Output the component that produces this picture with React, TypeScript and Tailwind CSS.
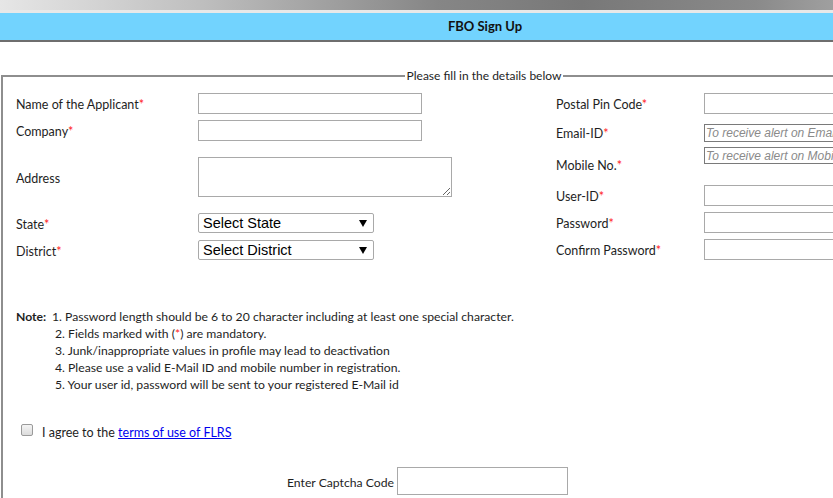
import React from "react";

const FONT = { fontFamily: "Lato, 'Open Sans', sans-serif" };

function Req() {
  return <span className="text-[#ff1a1a]">*</span>;
}

function TextBox({ w = "w-[224px]", h = "h-[21px]", placeholder }: { w?: string; h?: string; placeholder?: string }) {
  if (placeholder) {
    return (
      <input
        placeholder={placeholder}
        className={`${w} ${h} border border-[#7a7a7a] bg-white px-[1px] text-[12px] outline-none placeholder:italic placeholder:text-[#8a8a8a]`}
        style={{ fontFamily: "'Liberation Sans', Arial, sans-serif" }}
      />
    );
  }
  return <input className={`${w} ${h} border border-[#a9a9a9] bg-white outline-none`} />;
}

function Select({ label }: { label: string }) {
  return (
    <div className="relative w-[176px] h-[20px]">
      <select
        className="w-full h-full appearance-none rounded-[2px] border border-[#a9a9a9] bg-white pl-[4px] text-[14.5px] leading-none text-black outline-none"
        style={{ fontFamily: "'Liberation Sans', Arial, sans-serif" }}
      >
        <option>{label}</option>
      </select>
      <svg className="pointer-events-none absolute right-[7px] top-[7px]" width="8" height="7" viewBox="0 0 8 7">
        <path d="M0 0 H8 L4 7 Z" fill="#000" />
      </svg>
    </div>
  );
}

function Row({ label, children, className = "", lw = "w-[182px]" }: { label: React.ReactNode; children: React.ReactNode; className?: string; lw?: string }) {
  return (
    <div className={`flex items-center ${className}`}>
      <div className={`${lw} shrink-0 pt-[4px]`}>{label}</div>
      {children}
    </div>
  );
}

const NOTES = [
  "1. Password length should be 6 to 20 character including at least one special character.",
  "2. Fields marked with (*) are mandatory.",
  "3. Junk/inappropriate values in profile may lead to deactivation",
  "4. Please use a valid E-Mail ID and mobile number in registration.",
  "5. Your user id, password will be sent to your registered E-Mail id",
];

export default function App() {
  return (
    <div className="w-full h-screen overflow-hidden bg-white text-[12.5px] text-[#1e1e1e]" style={FONT}>
      <div className="w-[970px]">
        {/* header */}
        <div className="h-[10px] bg-[linear-gradient(to_right,#e6e6e6,#c0c0c0_20%,#868686_45%,#787878_60%,#8a8a8a_78%,#c6c6c6)]" />
        <div className="h-[3px] bg-[#e8e8e8]" />
        <div className="h-[29px] flex items-center justify-center pt-[1px] bg-[#72d3fe] border-b-2 border-[#6e6e6e] font-bold text-[13px] text-[#111]">
          FBO Sign Up
        </div>

        <fieldset className="mt-[26px] ml-px w-[966px] border-2 border-[#8e8e8e] pb-[20px]">
          <legend className="mx-auto px-[2px] text-[12px] leading-[16px]">Please fill in the details below</legend>

          <div className="pl-[13px]">
            <div className="flex pt-[9px]">
              {/* left column */}
              <div className="w-[540px] shrink-0 flex flex-col">
                <Row label={<>Name of the Applicant<Req /></>} className="h-[21px]">
                  <TextBox />
                </Row>
                <Row label={<>Company<Req /></>} className="h-[21px] mt-[6px]">
                  <TextBox />
                </Row>
                <Row label="Address" className="h-[40px] mt-[16px]">
                  <textarea className="w-[254px] h-[40px] border border-[#a9a9a9] bg-white outline-none" />
                </Row>
                <Row label={<>State<Req /></>} className="h-[20px] mt-[16px]">
                  <Select label="Select State" />
                </Row>
                <Row label={<>District<Req /></>} className="h-[20px] mt-[7px]">
                  <Select label="Select District" />
                </Row>
              </div>

              {/* right column */}
              <div className="flex flex-col">
                <Row lw="w-[148px]" label={<>Postal Pin Code<Req /></>} className="h-[21px]">
                  <TextBox w="w-[200px]" />
                </Row>
                <Row lw="w-[148px]" label={<>Email-ID<Req /></>} className="h-[21px] mt-[8px]">
                  <TextBox w="w-[200px]" h="h-[18px]" placeholder="To receive alert on Email" />
                </Row>
                <div className="flex items-start h-[30px] mt-[4px]">
                  <div className="w-[148px] shrink-0 pt-[10px]">Mobile No.<Req /></div>
                  <TextBox w="w-[200px]" h="h-[17px]" placeholder="To receive alert on Mobile" />
                </div>
                <Row lw="w-[148px]" label={<>User-ID<Req /></>} className="h-[21px] mt-[8px]">
                  <TextBox w="w-[200px]" />
                </Row>
                <Row lw="w-[148px]" label={<>Password<Req /></>} className="h-[21px] mt-[6px]">
                  <TextBox w="w-[200px]" />
                </Row>
                <Row lw="w-[148px]" label={<>Confirm Password<Req /></>} className="h-[21px] mt-[6px]">
                  <TextBox w="w-[200px]" />
                </Row>
              </div>
            </div>

            {/* notes */}
            <div className="mt-[48px] flex text-[12.2px] leading-[17px]">
              <div className="w-[36px] shrink-0 font-bold">Note:</div>
              <div className="flex flex-col">
                {NOTES.map((n, i) => (
                  <div key={i} className={i === 0 ? "" : "pl-[3px]"}>
                    {i === 1 ? (
                      <>
                        2. Fields marked with (<Req />) are mandatory.
                      </>
                    ) : (
                      n
                    )}
                  </div>
                ))}
              </div>
            </div>

            {/* agree */}
            <div className="mt-[30px] flex items-center gap-[9px]">
              <input
                type="checkbox"
                className="ml-[5px] -mt-[6px] w-[12px] h-[12px] appearance-none rounded-[2px] border border-[#9a9a9a] bg-[linear-gradient(#f4f4f4,#dcdcdc)]"
              />
              <span className="pt-[1px]">
                I agree to the{" "}
                <a href="#" className="text-[#0000ee] underline">
                  terms of use of FLRS
                </a>
              </span>
            </div>

            {/* captcha */}
            <div className="mt-[24px] flex items-center gap-[3px] pl-[271px]">
              <span className="pt-[4px] text-[12.2px]">Enter Captcha Code</span>
              <input className="w-[171px] h-[28px] border border-[#a9a9a9] bg-white outline-none" />
            </div>
          </div>
        </fieldset>
      </div>
    </div>
  );
}
